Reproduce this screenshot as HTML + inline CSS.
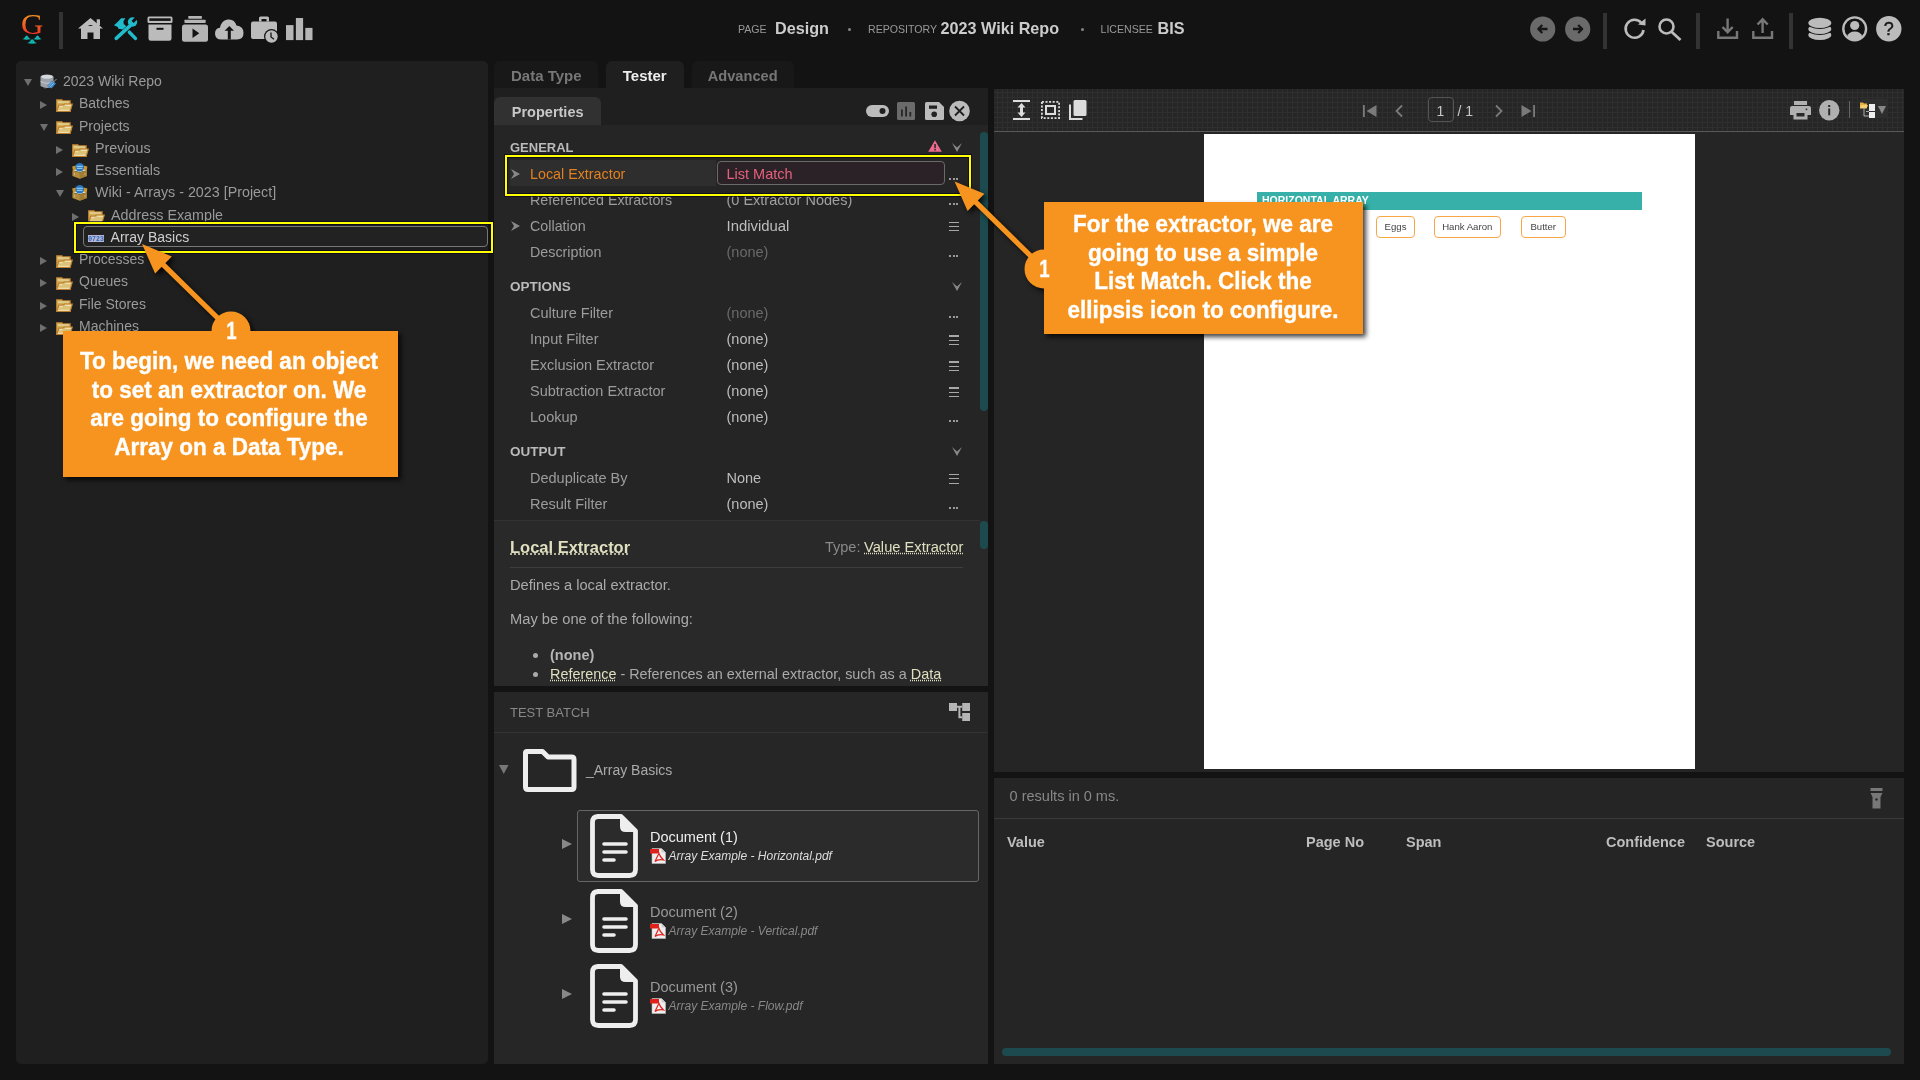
<!DOCTYPE html>
<html><head><meta charset="utf-8">
<style>
*{box-sizing:border-box;margin:0;padding:0}
html,body{width:1920px;height:1080px;overflow:hidden;background:#131313;font-family:"Liberation Sans",sans-serif;color:#999}
.a{position:absolute}
.t{position:absolute;white-space:nowrap;line-height:1}
svg{position:absolute;overflow:visible}
</style></head><body>
<div style="position:absolute;left:0;top:0;width:1920px;height:1080px;will-change:transform;overflow:hidden">

<div id="topbar">
 <!-- logo -->
 <svg style="left:18px;top:10px" width="30" height="36" viewBox="0 0 30 36">
  <defs><linearGradient id="gg" x1="0" y1="0" x2="0" y2="1"><stop offset="0.1" stop-color="#f5a21e"/><stop offset="0.9" stop-color="#ec2228"/></linearGradient></defs>
  <text x="14.3" y="24" text-anchor="middle" font-family="Liberation Serif" font-size="29.5" fill="url(#gg)" transform="translate(-0.7 0) scale(1.05 1)">G</text>
  <path d="M4.2 29.1 C7.4 28.5 7.1 25.6 8.7 25.6 C10.299999999999999 25.6 10.0 28.5 13.2 29.1 Q8.7 30.5 4.2 29.1Z M15 29.1 C18.2 28.5 17.9 25.6 19.5 25.6 C21.1 25.6 20.8 28.5 24 29.1 Q19.5 30.5 15 29.1Z M9 33.1 C12.2 32.5 12.55 29.2 14.15 29.2 C15.75 29.2 16.1 32.5 19.3 33.1 Q14.15 34.5 9 33.1Z" fill="#12b3ab"/>
 </svg>
 <div class="a" style="left:59px;top:12px;width:3.5px;height:37px;background:#333"></div>
 <!-- home -->
 <svg style="left:78px;top:18px" width="25" height="21" viewBox="0 0 25 21">
  <path d="M12.5 0 L25 10.5 L22 10.5 L22 21 L15.5 21 L15.5 14.5 L9.5 14.5 L9.5 21 L3 21 L3 10.5 L0 10.5 Z" fill="#bbb"/>
  <rect x="18.7" y="1.3" width="3.3" height="6" fill="#bbb"/>
  <path d="M10 8 Q12.5 5.8 15 8Z" fill="#131313"/>
 </svg>
 <!-- tools -->
 <svg style="left:113px;top:17px" width="25" height="24" viewBox="0 0 25 24">
  <g fill="#20bccb">
   <path d="M3.2 21.4 L17.2 8.6" stroke="#20bccb" stroke-width="3.5" stroke-linecap="round"/>
   <path d="M16.4 15.2 L22.4 21.4" stroke="#20bccb" stroke-width="3.5" stroke-linecap="round"/>
   <circle cx="19.5" cy="5" r="4.7"/>
   <path d="M19.6 4.9 L24.6 -0.1" stroke="#131313" stroke-width="3" stroke-linecap="butt"/>
   <path d="M1 8.2 L4.1 5.4 L8.2 1.3 L12.3 1.3 L10.4 4.4 L10.7 7 L13.3 9.2 L9.8 12.6 L5.4 11.7 L4.8 10.1Z"/>
  </g>
 </svg>
 <!-- archive -->
 <svg style="left:147px;top:16px" width="26" height="25" viewBox="0 0 26 25">
  <rect x="0.5" y="0.5" width="25" height="6.5" rx="1.5" fill="#bbb"/>
  <rect x="2.3" y="2.3" width="21.4" height="2.6" fill="#131313"/>
  <path d="M1.5 8.5 H24.5 V22.5 Q24.5 24.8 22.2 24.8 H3.8 Q1.5 24.8 1.5 22.5Z" fill="#bbb"/>
  <rect x="9.5" y="11.8" width="7" height="2" fill="#131313"/>
 </svg>
 <!-- play stack -->
 <svg style="left:182px;top:16px" width="26" height="26" viewBox="0 0 26 26">
  <rect x="6.3" y="0" width="13.6" height="2.8" rx="0.5" fill="#b5b5b5"/>
  <rect x="2.5" y="3.7" width="21.1" height="3.3" rx="0.5" fill="#b5b5b5"/>
  <rect x="0" y="8.4" width="26" height="17.3" rx="2.5" fill="#b5b5b5"/>
  <path d="M10.5 12.5 L17.3 17.3 L10.5 22Z" fill="#131313"/>
 </svg>
 <!-- cloud upload -->
 <svg style="left:215px;top:18px" width="29" height="22" viewBox="0 0 29 22">
  <path d="M6.5 21.5 Q0 21.5 0 15.5 Q0 10.5 5 9.8 Q6 3 12.5 1.5 Q19.5 0.5 21.5 7.5 Q28.5 8 28.5 15 Q28.5 21.5 22 21.5Z" fill="#bbb"/>
  <path d="M14.3 8 L19 12.8 L15.8 12.8 L15.8 21.5 L12.8 21.5 L12.8 12.8 L9.6 12.8Z" fill="#131313"/>
 </svg>
 <!-- briefcase clock -->
 <svg style="left:251px;top:16px" width="28" height="28" viewBox="0 0 28 28">
  <path d="M8 5.5 V2 Q8 0.5 9.5 0.5 H16.5 Q18 0.5 18 2 V5.5 H15.5 V3 H10.5 V5.5Z" fill="#bbb"/>
  <rect x="0" y="5.5" width="26" height="17.5" rx="2" fill="#bbb"/>
  <circle cx="20.5" cy="20.5" r="7.5" fill="#131313"/>
  <circle cx="20.5" cy="20.5" r="6.2" fill="#bbb"/>
  <path d="M20 16.5 V21 L23 23.2" stroke="#131313" stroke-width="1.3" fill="none"/>
 </svg>
 <!-- bar chart -->
 <svg style="left:285.7px;top:17.8px" width="27" height="23" viewBox="0 0 27 23">
  <rect x="0" y="7.1" width="7.5" height="15" fill="#b5b5b5"/>
  <rect x="9.9" y="0" width="7.2" height="22.1" fill="#b5b5b5"/>
  <rect x="19.3" y="9.9" width="7.2" height="12.2" fill="#b5b5b5"/>
 </svg>

 <!-- center breadcrumb -->
 <div class="t" style="left:738px;top:24px;font-size:10.6px;color:#999">PAGE</div>
 <div class="t" style="left:775px;top:20px;font-size:16.2px;font-weight:bold;color:#ccc">Design</div>
 <div class="a" style="left:848px;top:28px;width:3px;height:3px;border-radius:2px;background:#888"></div>
 <div class="t" style="left:868px;top:24px;font-size:10.6px;color:#999">REPOSITORY</div>
 <div class="t" style="left:940.5px;top:20px;font-size:16.2px;font-weight:bold;color:#ccc">2023 Wiki Repo</div>
 <div class="a" style="left:1081px;top:28px;width:3px;height:3px;border-radius:2px;background:#888"></div>
 <div class="t" style="left:1100.5px;top:24px;font-size:10.6px;color:#999">LICENSEE</div>
 <div class="t" style="left:1157.5px;top:20px;font-size:16.2px;font-weight:bold;color:#ccc">BIS</div>

 <!-- right icons -->
 <svg style="left:1530px;top:16px" width="26" height="26" viewBox="0 0 26 26">
  <circle cx="12.7" cy="13" r="12.6" fill="#6a6a6a"/>
  <path d="M17.5 13 H8.5 M12.3 9 L8.3 13 L12.3 17" stroke="#161616" stroke-width="2.3" fill="none" stroke-linejoin="round"/>
 </svg>
 <svg style="left:1564.5px;top:16px" width="26" height="26" viewBox="0 0 26 26">
  <circle cx="12.7" cy="13" r="12.6" fill="#6a6a6a"/>
  <path d="M8 13 H17 M13.2 9 L17.2 13 L13.2 17" stroke="#161616" stroke-width="2.3" fill="none" stroke-linejoin="round"/>
 </svg>
 <div class="a" style="left:1603px;top:12.5px;width:3.5px;height:36px;background:#333"></div>
 <!-- refresh -->
 <svg style="left:1624px;top:18px" width="24" height="22" viewBox="0 0 24 22">
  <path d="M19.5 12 A9 9 0 1 1 17.5 5" stroke="#bbb" stroke-width="2.6" fill="none"/>
  <path d="M14 6.5 L21.5 7.5 L21.5 0.5Z" fill="#bbb"/>
 </svg>
 <!-- search -->
 <svg style="left:1658px;top:18px" width="24" height="23" viewBox="0 0 24 23">
  <circle cx="8.5" cy="8.5" r="7" stroke="#bbb" stroke-width="2.6" fill="none"/>
  <line x1="13.5" y1="13.8" x2="22.5" y2="22" stroke="#bbb" stroke-width="2.8"/>
 </svg>
 <div class="a" style="left:1696px;top:12.5px;width:3.5px;height:36px;background:#333"></div>
 <!-- download -->
 <svg style="left:1717px;top:18px" width="22" height="22" viewBox="0 0 22 22">
  <path d="M1.3 13 V19.8 H20 V13" stroke="#777" stroke-width="2.4" fill="none"/>
  <path d="M10.6 0.5 V14 M5.5 9 L10.6 14.2 L15.7 9" stroke="#777" stroke-width="2.4" fill="none"/>
 </svg>
 <!-- upload -->
 <svg style="left:1752px;top:18px" width="22" height="22" viewBox="0 0 22 22">
  <path d="M1.3 13 V19.8 H20 V13" stroke="#777" stroke-width="2.4" fill="none"/>
  <path d="M10.6 15 V1.5 M5.5 6.5 L10.6 1.3 L15.7 6.5" stroke="#777" stroke-width="2.4" fill="none"/>
 </svg>
 <div class="a" style="left:1789px;top:12.5px;width:3.5px;height:36px;background:#333"></div>
 <!-- db -->
 <svg style="left:1808px;top:17px" width="24" height="24" viewBox="0 0 24 24">
  <ellipse cx="11.8" cy="17.9" rx="11.6" ry="5.2" fill="#bbb"/>
  <ellipse cx="11.8" cy="11.9" rx="12.6" ry="6.2" fill="#131313"/>
  <ellipse cx="11.8" cy="11.9" rx="11.6" ry="5.2" fill="#bbb"/>
  <ellipse cx="11.8" cy="5.9" rx="12.6" ry="6.2" fill="#131313"/>
  <ellipse cx="11.8" cy="5.9" rx="11.6" ry="5.2" fill="#bbb"/>
 </svg>
 <!-- user -->
 <svg style="left:1841.5px;top:16px" width="26" height="26" viewBox="0 0 26 26">
  <circle cx="12.7" cy="12.8" r="11.4" stroke="#bbb" stroke-width="2.4" fill="none"/>
  <circle cx="12.7" cy="9.5" r="4.6" fill="#bbb"/>
  <path d="M5 20.5 Q7 15.5 12.7 15.5 Q18.4 15.5 20.4 20.5 Q17 24 12.7 24 Q8.4 24 5 20.5Z" fill="#bbb"/>
 </svg>
 <!-- help -->
 <svg style="left:1876px;top:16px" width="26" height="26" viewBox="0 0 26 26">
  <circle cx="12.8" cy="12.8" r="12.7" fill="#bbb"/>
  <text x="12.8" y="19.3" text-anchor="middle" font-family="Liberation Sans" font-size="18" fill="#161616" stroke="#161616" stroke-width="0.4">?</text>
 </svg>
</div>


<div class="a" style="left:16px;top:61px;width:472px;height:1003px;background:#1f1f1f;border-radius:5px"></div>
<svg style="left:23.5px;top:79.2px" width="8" height="7" viewBox="0 0 8 7"><path d="M0 0 H8 L4.0 7Z" fill="#6f6f6f"/></svg>
<svg style="left:40px;top:73.7px" width="17" height="15" viewBox="0 0 17 15"><ellipse cx="7" cy="3" rx="6.5" ry="2.6" fill="#b8bcc2"/><path d="M0.5 3 V12 Q7 16 13.5 12 V3 Q7 7 0.5 3Z" fill="#9ea3aa"/><path d="M0.5 7.5 Q7 11 13.5 7.5" stroke="#d0d3d8" stroke-width="0.8" fill="none"/><ellipse cx="7" cy="2.8" rx="5.5" ry="1.8" fill="#d6d9dd"/><path d="M7 12 L12 6.5 L16 9.5 L11.5 14.5Z" fill="#3b86c6"/><path d="M8.5 12.3 L12.5 7.8 M10 13.3 L14 8.8" stroke="#9cc8ee" stroke-width="0.8"/><path d="M16.5 5 L13.5 8 M7 12.5 L5 14.5" stroke="#999" stroke-width="1"/></svg>
<div class="t" style="left:63px;top:74.00px;font-size:14px;color:#9a9a9a;">2023 Wiki Repo</div>
<svg style="left:39.5px;top:101.25px" width="7" height="8" viewBox="0 0 7 8"><path d="M0 0 L7 4.0 L0 8Z" fill="#6f6f6f"/></svg>
<svg style="left:56px;top:99.15px" width="17" height="13" viewBox="0 0 17 13"><path d="M0.6 12.4 V0.8 H6 L7 1.8 H14.2 V12.4Z" fill="#d2b25c" stroke="#bb7c2c" stroke-width="1.1"/><path d="M1.6 3 H13" stroke="#f2e6c0" stroke-width="0.9"/><path d="M0.7 12.4 L2.8 6 H7 L8.4 5 H16.3 L14.2 12.4Z" fill="#dcc277" stroke="#bb7c2c" stroke-width="1.1"/><path d="M9.3 6.3 H15.2 M3.3 7.8 H6.5 M1.8 11.3 H13.3" stroke="#f5ecc8" stroke-width="0.9"/></svg>
<div class="t" style="left:79px;top:96.00px;font-size:14px;color:#9a9a9a;">Batches</div>
<svg style="left:39.5px;top:123.69999999999999px" width="8" height="7" viewBox="0 0 8 7"><path d="M0 0 H8 L4.0 7Z" fill="#6f6f6f"/></svg>
<svg style="left:56px;top:121.39999999999999px" width="17" height="13" viewBox="0 0 17 13"><path d="M0.6 12.4 V0.8 H6 L7 1.8 H14.2 V12.4Z" fill="#d2b25c" stroke="#bb7c2c" stroke-width="1.1"/><path d="M1.6 3 H13" stroke="#f2e6c0" stroke-width="0.9"/><path d="M0.7 12.4 L2.8 6 H7 L8.4 5 H16.3 L14.2 12.4Z" fill="#dcc277" stroke="#bb7c2c" stroke-width="1.1"/><path d="M9.3 6.3 H15.2 M3.3 7.8 H6.5 M1.8 11.3 H13.3" stroke="#f5ecc8" stroke-width="0.9"/></svg>
<div class="t" style="left:79px;top:119.00px;font-size:14px;color:#9a9a9a;">Projects</div>
<svg style="left:55.5px;top:145.75px" width="7" height="8" viewBox="0 0 7 8"><path d="M0 0 L7 4.0 L0 8Z" fill="#6f6f6f"/></svg>
<svg style="left:72px;top:143.64999999999998px" width="17" height="13" viewBox="0 0 17 13"><path d="M0.6 12.4 V0.8 H6 L7 1.8 H14.2 V12.4Z" fill="#d2b25c" stroke="#bb7c2c" stroke-width="1.1"/><path d="M1.6 3 H13" stroke="#f2e6c0" stroke-width="0.9"/><path d="M0.7 12.4 L2.8 6 H7 L8.4 5 H16.3 L14.2 12.4Z" fill="#dcc277" stroke="#bb7c2c" stroke-width="1.1"/><path d="M9.3 6.3 H15.2 M3.3 7.8 H6.5 M1.8 11.3 H13.3" stroke="#f5ecc8" stroke-width="0.9"/></svg>
<div class="t" style="left:95px;top:141.00px;font-size:14.3px;color:#9a9a9a;">Previous</div>
<svg style="left:55.5px;top:168.0px" width="7" height="8" viewBox="0 0 7 8"><path d="M0 0 L7 4.0 L0 8Z" fill="#6f6f6f"/></svg>
<svg style="left:72px;top:163.2px" width="16" height="16" viewBox="0 0 16 16"><path d="M0.2 3.5 L3.8 2.5 L5.5 7 L1 8Z" fill="#c8962e"/><path d="M15.3 3.5 L11.7 2.5 L10.3 7 L14.8 8Z" fill="#c8962e"/><path d="M1 7.2 L7.7 6 L14.6 7.2 L7.7 9.3Z" fill="#e8e0c8"/><circle cx="7.7" cy="4.3" r="4.3" fill="#2678c2"/><path d="M4.6 3.3 H10.8 M4.9 5.3 H10.5" stroke="#d8ecf8" stroke-width="0.8"/><path d="M0.4 7.4 L7.7 9.6 L15 7.4 V12.9 L7.7 15.8 L0.4 12.9Z" fill="#b48d3e"/><path d="M7.7 9.6 V15.8 L15 12.9 V7.4Z" fill="#a07c34"/><path d="M2.5 9.8 V12.3 M13 9.8 V12.3" stroke="#d9c48a" stroke-width="0.7"/></svg>
<div class="t" style="left:95px;top:163.00px;font-size:14.3px;color:#9a9a9a;">Essentials</div>
<svg style="left:55.5px;top:190.45px" width="8" height="7" viewBox="0 0 8 7"><path d="M0 0 H8 L4.0 7Z" fill="#6f6f6f"/></svg>
<svg style="left:72px;top:185.45px" width="16" height="16" viewBox="0 0 16 16"><path d="M0.2 3.5 L3.8 2.5 L5.5 7 L1 8Z" fill="#c8962e"/><path d="M15.3 3.5 L11.7 2.5 L10.3 7 L14.8 8Z" fill="#c8962e"/><path d="M1 7.2 L7.7 6 L14.6 7.2 L7.7 9.3Z" fill="#e8e0c8"/><circle cx="7.7" cy="4.3" r="4.3" fill="#2678c2"/><path d="M4.6 3.3 H10.8 M4.9 5.3 H10.5" stroke="#d8ecf8" stroke-width="0.8"/><path d="M0.4 7.4 L7.7 9.6 L15 7.4 V12.9 L7.7 15.8 L0.4 12.9Z" fill="#b48d3e"/><path d="M7.7 9.6 V15.8 L15 12.9 V7.4Z" fill="#a07c34"/><path d="M2.5 9.8 V12.3 M13 9.8 V12.3" stroke="#d9c48a" stroke-width="0.7"/></svg>
<div class="t" style="left:95px;top:185.00px;font-size:14.3px;color:#9a9a9a;">Wiki - Arrays - 2023 [Project]</div>
<svg style="left:71.5px;top:212.5px" width="7" height="8" viewBox="0 0 7 8"><path d="M0 0 L7 4.0 L0 8Z" fill="#6f6f6f"/></svg>
<svg style="left:88px;top:210.39999999999998px" width="17" height="13" viewBox="0 0 17 13"><path d="M0.6 12.4 V0.8 H6 L7 1.8 H14.2 V12.4Z" fill="#d2b25c" stroke="#bb7c2c" stroke-width="1.1"/><path d="M1.6 3 H13" stroke="#f2e6c0" stroke-width="0.9"/><path d="M0.7 12.4 L2.8 6 H7 L8.4 5 H16.3 L14.2 12.4Z" fill="#dcc277" stroke="#bb7c2c" stroke-width="1.1"/><path d="M9.3 6.3 H15.2 M3.3 7.8 H6.5 M1.8 11.3 H13.3" stroke="#f5ecc8" stroke-width="0.9"/></svg>
<div class="t" style="left:111px;top:208.00px;font-size:14.3px;color:#9a9a9a;">Address Example</div>
<div class="a" style="left:83px;top:226px;width:405px;height:21px;background:#222;border:1.3px solid #777;border-radius:4px"></div>
<svg style="left:88px;top:234.5px" width="16" height="7" viewBox="0 0 16 7"><rect x="0" y="0" width="16" height="7" fill="#b9b3d9"/><text x="8" y="6" text-anchor="middle" font-family="Liberation Mono" font-weight="bold" font-size="6.5" fill="#2a6fb0">0723</text></svg>
<div class="t" style="left:110.6px;top:230.00px;font-size:14px;color:#cfcfcf;">Array Basics</div>
<svg style="left:39.5px;top:257.0px" width="7" height="8" viewBox="0 0 7 8"><path d="M0 0 L7 4.0 L0 8Z" fill="#6f6f6f"/></svg>
<svg style="left:56px;top:254.89999999999998px" width="17" height="13" viewBox="0 0 17 13"><path d="M0.6 12.4 V0.8 H6 L7 1.8 H14.2 V12.4Z" fill="#d2b25c" stroke="#bb7c2c" stroke-width="1.1"/><path d="M1.6 3 H13" stroke="#f2e6c0" stroke-width="0.9"/><path d="M0.7 12.4 L2.8 6 H7 L8.4 5 H16.3 L14.2 12.4Z" fill="#dcc277" stroke="#bb7c2c" stroke-width="1.1"/><path d="M9.3 6.3 H15.2 M3.3 7.8 H6.5 M1.8 11.3 H13.3" stroke="#f5ecc8" stroke-width="0.9"/></svg>
<div class="t" style="left:79px;top:252.00px;font-size:14px;color:#9a9a9a;">Processes</div>
<svg style="left:39.5px;top:279.25px" width="7" height="8" viewBox="0 0 7 8"><path d="M0 0 L7 4.0 L0 8Z" fill="#6f6f6f"/></svg>
<svg style="left:56px;top:277.15px" width="17" height="13" viewBox="0 0 17 13"><path d="M0.6 12.4 V0.8 H6 L7 1.8 H14.2 V12.4Z" fill="#d2b25c" stroke="#bb7c2c" stroke-width="1.1"/><path d="M1.6 3 H13" stroke="#f2e6c0" stroke-width="0.9"/><path d="M0.7 12.4 L2.8 6 H7 L8.4 5 H16.3 L14.2 12.4Z" fill="#dcc277" stroke="#bb7c2c" stroke-width="1.1"/><path d="M9.3 6.3 H15.2 M3.3 7.8 H6.5 M1.8 11.3 H13.3" stroke="#f5ecc8" stroke-width="0.9"/></svg>
<div class="t" style="left:79px;top:274.00px;font-size:14px;color:#9a9a9a;">Queues</div>
<svg style="left:39.5px;top:301.5px" width="7" height="8" viewBox="0 0 7 8"><path d="M0 0 L7 4.0 L0 8Z" fill="#6f6f6f"/></svg>
<svg style="left:56px;top:299.4px" width="17" height="13" viewBox="0 0 17 13"><path d="M0.6 12.4 V0.8 H6 L7 1.8 H14.2 V12.4Z" fill="#d2b25c" stroke="#bb7c2c" stroke-width="1.1"/><path d="M1.6 3 H13" stroke="#f2e6c0" stroke-width="0.9"/><path d="M0.7 12.4 L2.8 6 H7 L8.4 5 H16.3 L14.2 12.4Z" fill="#dcc277" stroke="#bb7c2c" stroke-width="1.1"/><path d="M9.3 6.3 H15.2 M3.3 7.8 H6.5 M1.8 11.3 H13.3" stroke="#f5ecc8" stroke-width="0.9"/></svg>
<div class="t" style="left:79px;top:297.00px;font-size:14px;color:#9a9a9a;">File Stores</div>
<svg style="left:39.5px;top:323.75px" width="7" height="8" viewBox="0 0 7 8"><path d="M0 0 L7 4.0 L0 8Z" fill="#6f6f6f"/></svg>
<svg style="left:56px;top:321.65px" width="17" height="13" viewBox="0 0 17 13"><path d="M0.6 12.4 V0.8 H6 L7 1.8 H14.2 V12.4Z" fill="#d2b25c" stroke="#bb7c2c" stroke-width="1.1"/><path d="M1.6 3 H13" stroke="#f2e6c0" stroke-width="0.9"/><path d="M0.7 12.4 L2.8 6 H7 L8.4 5 H16.3 L14.2 12.4Z" fill="#dcc277" stroke="#bb7c2c" stroke-width="1.1"/><path d="M9.3 6.3 H15.2 M3.3 7.8 H6.5 M1.8 11.3 H13.3" stroke="#f5ecc8" stroke-width="0.9"/></svg>
<div class="t" style="left:79px;top:319.00px;font-size:14px;color:#9a9a9a;">Machines</div>
<div class="a" style="left:74px;top:222px;width:419px;height:31px;background:transparent;border:2.4px solid #ffff00;box-shadow:0 0 0 1px rgba(5,5,25,0.7), inset 0 0 0 1px rgba(5,5,25,0.7)"></div>
<div class="a" style="left:494px;top:61px;width:104px;height:27px;background:#181818;border-radius:6px 6px 0 0"></div>
<div class="a" style="left:606px;top:61px;width:78px;height:27px;background:#1f1f1f;border-radius:6px 6px 0 0"></div>
<div class="a" style="left:692px;top:61px;width:102px;height:27px;background:#181818;border-radius:6px 6px 0 0"></div>
<div class="t" style="left:511px;top:68.00px;font-size:15px;color:#777;font-weight:bold">Data Type</div>
<div class="t" style="left:622.8px;top:68.00px;font-size:15px;color:#eee;font-weight:bold">Tester</div>
<div class="t" style="left:707.8px;top:69.00px;font-size:14.6px;color:#777;font-weight:bold">Advanced</div>
<div class="a" style="left:494px;top:88px;width:494px;height:37px;background:#1f1f1f;"></div>
<div class="a" style="left:494px;top:97px;width:107px;height:28px;background:#313131;border-radius:6px 6px 0 0"></div>
<div class="t" style="left:511.8px;top:105.00px;font-size:14.5px;color:#c8c8c8;font-weight:bold">Properties</div>
<div class="a" style="left:494px;top:125px;width:494px;height:561px;background:#252525;"></div>
<div class="a" style="left:494px;top:521px;width:494px;height:165px;background:#292929;"></div>
<div class="a" style="left:494px;top:520px;width:486px;height:1px;background:#333;"></div>
<div class="a" style="left:494px;top:692px;width:494px;height:372px;background:#262626;"></div>
<svg style="left:866px;top:105px" width="23" height="12" viewBox="0 0 23 12"><rect x="0" y="0" width="23" height="12" rx="6" fill="#bbb"/><circle cx="16.5" cy="6" r="3" fill="#1f1f1f"/></svg>
<svg style="left:897px;top:102px" width="18" height="18" viewBox="0 0 18 18"><rect x="0" y="0" width="18" height="18" rx="1.5" fill="#6b6b6b"/><rect x="4" y="7.5" width="1.8" height="7" fill="#262626"/><rect x="8.2" y="4.5" width="1.8" height="10" fill="#262626"/><rect x="12.4" y="10" width="1.8" height="4.5" fill="#262626"/></svg>
<svg style="left:925px;top:102px" width="19" height="18" viewBox="0 0 19 18"><path d="M1.5 0 H14 L19 5 V16.5 Q19 18 17.5 18 H1.5 Q0 18 0 16.5 V1.5 Q0 0 1.5 0Z" fill="#bbb"/><rect x="4" y="3.5" width="8" height="3.3" fill="#222"/><circle cx="9.2" cy="12.2" r="2.8" fill="#222"/></svg>
<svg style="left:949px;top:101px" width="21" height="20" viewBox="0 0 21 20"><circle cx="10.5" cy="10" r="10.3" fill="#bbb"/><path d="M6 5.5 L15 14.5 M15 5.5 L6 14.5" stroke="#1f1f1f" stroke-width="1.8"/></svg>
<div class="t" style="left:510px;top:141.00px;font-size:13px;color:#bbb;font-weight:bold">GENERAL</div>
<svg style="left:928px;top:139.5px" width="14" height="12" viewBox="0 0 14 12"><path d="M7 0.3 L13.8 11.8 H0.2Z" fill="#ec6a8d"/><rect x="6.3" y="4" width="1.5" height="4.2" fill="#242424"/><rect x="6.3" y="9" width="1.5" height="1.5" fill="#242424"/></svg>
<svg style="left:952px;top:143px" width="10" height="9" viewBox="0 0 10 9"><path d="M0 0 L5 9 L10 0 L5 4.5Z" fill="#888"/></svg>
<div class="a" style="left:510px;top:160px;width:206px;height:26px;background:#2e2e2e;"></div>
<svg style="left:511px;top:169px" width="9" height="10" viewBox="0 0 9 10"><path d="M0 0 L9 5 L0 10 L3 5Z" fill="#888"/></svg>
<div class="t" style="left:530px;top:167.00px;font-size:14.3px;color:#e3811f;">Local Extractor</div>
<div class="a" style="left:717px;top:161px;width:228px;height:24px;background:#2a2226;border:1.2px solid #6a6a6a;border-radius:4px"></div>
<div class="t" style="left:726.5px;top:167.00px;font-size:14.5px;color:#e6607e;">List Match</div>
<div class="a" style="left:949px;top:177.5px;width:2px;height:2px;background:#9a9a9a;"></div>
<div class="a" style="left:952.6px;top:177.5px;width:2px;height:2px;background:#9a9a9a;"></div>
<div class="a" style="left:956.2px;top:177.5px;width:2px;height:2px;background:#9a9a9a;"></div>
<div class="t" style="left:530px;top:193.00px;font-size:14.3px;color:#9c9c9c;">Referenced Extractors</div>
<div class="t" style="left:726.5px;top:193.00px;font-size:14.5px;color:#a0a0a0;">(0 Extractor Nodes)</div>
<div class="a" style="left:949px;top:203px;width:2px;height:2px;background:#9a9a9a;"></div>
<div class="a" style="left:952.6px;top:203px;width:2px;height:2px;background:#9a9a9a;"></div>
<div class="a" style="left:956.2px;top:203px;width:2px;height:2px;background:#9a9a9a;"></div>
<svg style="left:511px;top:221px" width="9" height="10" viewBox="0 0 9 10"><path d="M0 0 L9 5 L0 10 L3 5Z" fill="#888"/></svg>
<div class="t" style="left:530px;top:219.00px;font-size:14.3px;color:#9c9c9c;">Collation</div>
<div class="t" style="left:726.5px;top:219.00px;font-size:14.9px;color:#bdbdbd;">Individual</div>
<div class="a" style="left:948.5px;top:221.5px;width:10.5px;height:1.3px;background:#a8a8a8;"></div>
<div class="a" style="left:948.5px;top:225.9px;width:10.5px;height:1.3px;background:#a8a8a8;"></div>
<div class="a" style="left:948.5px;top:230.2px;width:10.5px;height:1.3px;background:#a8a8a8;"></div>
<div class="t" style="left:530px;top:245.00px;font-size:14.3px;color:#9c9c9c;">Description</div>
<div class="t" style="left:726.5px;top:245.00px;font-size:14.5px;color:#6a6a6a;">(none)</div>
<div class="a" style="left:949px;top:255px;width:2px;height:2px;background:#9a9a9a;"></div>
<div class="a" style="left:952.6px;top:255px;width:2px;height:2px;background:#9a9a9a;"></div>
<div class="a" style="left:956.2px;top:255px;width:2px;height:2px;background:#9a9a9a;"></div>
<div class="t" style="left:510px;top:280.00px;font-size:13.5px;color:#bbb;font-weight:bold">OPTIONS</div>
<svg style="left:952px;top:282px" width="10" height="9" viewBox="0 0 10 9"><path d="M0 0 L5 9 L10 0 L5 4.5Z" fill="#888"/></svg>
<div class="t" style="left:530px;top:306.00px;font-size:14.5px;color:#9c9c9c;">Culture Filter</div>
<div class="t" style="left:726.5px;top:306.00px;font-size:14.5px;color:#6a6a6a;">(none)</div>
<div class="a" style="left:949px;top:316.3px;width:2px;height:2px;background:#9a9a9a;"></div>
<div class="a" style="left:952.6px;top:316.3px;width:2px;height:2px;background:#9a9a9a;"></div>
<div class="a" style="left:956.2px;top:316.3px;width:2px;height:2px;background:#9a9a9a;"></div>
<div class="t" style="left:530px;top:332.00px;font-size:14.5px;color:#9c9c9c;">Input Filter</div>
<div class="t" style="left:726.5px;top:332.00px;font-size:14.5px;color:#bdbdbd;">(none)</div>
<div class="a" style="left:948.5px;top:335.3px;width:10.5px;height:1.3px;background:#a8a8a8;"></div>
<div class="a" style="left:948.5px;top:339.7px;width:10.5px;height:1.3px;background:#a8a8a8;"></div>
<div class="a" style="left:948.5px;top:344.0px;width:10.5px;height:1.3px;background:#a8a8a8;"></div>
<div class="t" style="left:530px;top:358.00px;font-size:14.5px;color:#9c9c9c;">Exclusion Extractor</div>
<div class="t" style="left:726.5px;top:358.00px;font-size:14.5px;color:#bdbdbd;">(none)</div>
<div class="a" style="left:948.5px;top:361.3px;width:10.5px;height:1.3px;background:#a8a8a8;"></div>
<div class="a" style="left:948.5px;top:365.7px;width:10.5px;height:1.3px;background:#a8a8a8;"></div>
<div class="a" style="left:948.5px;top:370.0px;width:10.5px;height:1.3px;background:#a8a8a8;"></div>
<div class="t" style="left:530px;top:384.00px;font-size:14.5px;color:#9c9c9c;">Subtraction Extractor</div>
<div class="t" style="left:726.5px;top:384.00px;font-size:14.5px;color:#bdbdbd;">(none)</div>
<div class="a" style="left:948.5px;top:387.3px;width:10.5px;height:1.3px;background:#a8a8a8;"></div>
<div class="a" style="left:948.5px;top:391.7px;width:10.5px;height:1.3px;background:#a8a8a8;"></div>
<div class="a" style="left:948.5px;top:396.0px;width:10.5px;height:1.3px;background:#a8a8a8;"></div>
<div class="t" style="left:530px;top:410.00px;font-size:14.5px;color:#9c9c9c;">Lookup</div>
<div class="t" style="left:726.5px;top:410.00px;font-size:14.5px;color:#bdbdbd;">(none)</div>
<div class="a" style="left:949px;top:420.3px;width:2px;height:2px;background:#9a9a9a;"></div>
<div class="a" style="left:952.6px;top:420.3px;width:2px;height:2px;background:#9a9a9a;"></div>
<div class="a" style="left:956.2px;top:420.3px;width:2px;height:2px;background:#9a9a9a;"></div>
<div class="t" style="left:510px;top:445.00px;font-size:13.5px;color:#bbb;font-weight:bold">OUTPUT</div>
<svg style="left:952px;top:447px" width="10" height="9" viewBox="0 0 10 9"><path d="M0 0 L5 9 L10 0 L5 4.5Z" fill="#888"/></svg>
<div class="t" style="left:530px;top:471.00px;font-size:14.5px;color:#9c9c9c;">Deduplicate By</div>
<div class="t" style="left:726.5px;top:471.00px;font-size:14.5px;color:#bdbdbd;">None</div>
<div class="a" style="left:948.5px;top:473.8px;width:10.5px;height:1.3px;background:#a8a8a8;"></div>
<div class="a" style="left:948.5px;top:478.2px;width:10.5px;height:1.3px;background:#a8a8a8;"></div>
<div class="a" style="left:948.5px;top:482.5px;width:10.5px;height:1.3px;background:#a8a8a8;"></div>
<div class="t" style="left:530px;top:497.00px;font-size:14.5px;color:#9c9c9c;">Result Filter</div>
<div class="t" style="left:726.5px;top:497.00px;font-size:14.5px;color:#bdbdbd;">(none)</div>
<div class="a" style="left:949px;top:507.3px;width:2px;height:2px;background:#9a9a9a;"></div>
<div class="a" style="left:952.6px;top:507.3px;width:2px;height:2px;background:#9a9a9a;"></div>
<div class="a" style="left:956.2px;top:507.3px;width:2px;height:2px;background:#9a9a9a;"></div>
<div class="a" style="left:980px;top:132px;width:8px;height:279px;background:#1c4a4e;border-radius:4px"></div>
<div class="a" style="left:980px;top:521px;width:8px;height:28px;background:#1c4a4e;border-radius:4px"></div>
<div class="a" style="left:505px;top:155px;width:466px;height:41px;background:transparent;border:2.2px solid #ffff00;box-shadow:0 0 0 1px rgba(5,5,25,0.7), inset 0 0 0 1px rgba(5,5,25,0.7)"></div>
<div class="t" style="left:510px;top:539.00px;font-size:16.5px;color:#e0dfc0;font-weight:bold;text-decoration:underline dotted;text-underline-offset:1px">Local Extractor</div>
<div class="t" style="left:825px;top:540.00px;font-size:14.5px;color:#8a8a8a;">Type:</div>
<div class="t" style="left:864px;top:540.00px;font-size:14.7px;color:#e0dfc0;text-decoration:underline dotted;text-underline-offset:1px">Value Extractor</div>
<div class="a" style="left:510px;top:567px;width:453px;height:1px;background:#3e3e3e;"></div>
<div class="t" style="left:510px;top:578.00px;font-size:14.7px;color:#aaa;">Defines a local extractor.</div>
<div class="t" style="left:510px;top:612.00px;font-size:14.7px;color:#aaa;">May be one of the following:</div>
<div class="a" style="left:533px;top:652.5px;width:5px;height:5px;background:#aaa;border-radius:3px"></div>
<div class="t" style="left:550px;top:648.00px;font-size:14.5px;color:#b5b5b5;font-weight:bold">(none)</div>
<div class="a" style="left:533px;top:671.5px;width:5px;height:5px;background:#aaa;border-radius:3px"></div>
<div class="t" style="left:550px;top:667.00px;font-size:14.4px;color:#aaa;"><span style="color:#e0dfc0;text-decoration:underline dotted;text-underline-offset:1px">Reference</span> - References an external extractor, such as a <span style="color:#e0dfc0;text-decoration:underline dotted;text-underline-offset:1px">Data</span></div>
<div class="t" style="left:510px;top:706.00px;font-size:13px;color:#888;">TEST BATCH</div>
<svg style="left:948px;top:702px" width="23" height="20" viewBox="0 0 23 20"><rect x="1" y="1" width="8" height="8" fill="#b5b5b5"/><rect x="14.2" y="1" width="7.8" height="8" fill="#b5b5b5"/><rect x="14.2" y="11" width="7.8" height="8" fill="#b5b5b5"/><path d="M9 4.8 H14.2 M11.4 4.8 V15.2 H14.2" stroke="#b5b5b5" stroke-width="2" fill="none"/></svg>
<div class="a" style="left:494px;top:732px;width:494px;height:1px;background:#333;"></div>
<svg style="left:498.5px;top:765px" width="9.5" height="9" viewBox="0 0 9.5 9"><path d="M0 0 H9.5 L4.75 9Z" fill="#777"/></svg>
<svg style="left:523px;top:749px" width="54" height="43" viewBox="0 0 54 43"><path d="M4 2.5 H19.5 L25 8 H48.5 Q51 8 51 10.5 V38 Q51 40.5 48.5 40.5 H5 Q2.5 40.5 2.5 38 V4 Q2.5 2.5 4 2.5Z" stroke="#eee" stroke-width="5" fill="none" stroke-linejoin="round"/></svg>
<div class="t" style="left:586px;top:763.00px;font-size:14px;color:#aaa;">_Array Basics</div>
<div class="a" style="left:577px;top:809.5px;width:402px;height:72.5px;background:#2b2b2b;border:1.2px solid #666;border-radius:3px"></div>
<svg style="left:562px;top:839px" width="10" height="10" viewBox="0 0 10 10"><path d="M0 0 L10 5.0 L0 10Z" fill="#888"/></svg>
<svg style="left:589.5px;top:813.5px" width="48" height="64" viewBox="0 0 48 64"><path d="M7.5 2.5 H31 L45.5 17 V55.5 Q45.5 61.5 39.5 61.5 H8.5 Q2.5 61.5 2.5 55.5 V8.5 Q2.5 2.5 8.5 2.5Z" stroke="#eee" stroke-width="4.8" fill="none" stroke-linejoin="round"/><path d="M30 2.5 V12.5 Q30 18 35.5 18 H45.5" fill="#eee"/><path d="M31 3 L45 17 H35 Q31 17 31 13Z" fill="#eee"/><path d="M14 30 H36 M14 38 H36 M14 46 H24" stroke="#eee" stroke-width="3.6" stroke-linecap="round"/></svg>
<div class="t" style="left:650px;top:830.00px;font-size:14.5px;color:#eee;">Document (1)</div>
<svg style="left:650px;top:847.5px" width="16" height="16" viewBox="0 0 16 16"><path d="M2 0.5 H11.5 L15.5 4.5 V15.5 H2Z" fill="#eee" stroke="#bbb" stroke-width="0.6"/><path d="M11.5 0.5 V4.5 H15.5" fill="#ccc"/><rect x="0" y="1" width="9" height="4.5" fill="#e0201b"/><path d="M5 13.5 Q8 7 9 5.5 Q10 9 13.5 12 Q8 11 5 13.5Z" stroke="#e0201b" stroke-width="1.2" fill="none"/></svg>
<div class="t" style="left:668.5px;top:850.00px;font-size:12px;color:#ddd;font-style:italic">Array Example - Horizontal.pdf</div>
<svg style="left:562px;top:914px" width="10" height="10" viewBox="0 0 10 10"><path d="M0 0 L10 5.0 L0 10Z" fill="#888"/></svg>
<svg style="left:589.5px;top:888.5px" width="48" height="64" viewBox="0 0 48 64"><path d="M7.5 2.5 H31 L45.5 17 V55.5 Q45.5 61.5 39.5 61.5 H8.5 Q2.5 61.5 2.5 55.5 V8.5 Q2.5 2.5 8.5 2.5Z" stroke="#eee" stroke-width="4.8" fill="none" stroke-linejoin="round"/><path d="M30 2.5 V12.5 Q30 18 35.5 18 H45.5" fill="#eee"/><path d="M31 3 L45 17 H35 Q31 17 31 13Z" fill="#eee"/><path d="M14 30 H36 M14 38 H36 M14 46 H24" stroke="#eee" stroke-width="3.6" stroke-linecap="round"/></svg>
<div class="t" style="left:650px;top:905.00px;font-size:14.5px;color:#999;">Document (2)</div>
<svg style="left:650px;top:922.5px" width="16" height="16" viewBox="0 0 16 16"><path d="M2 0.5 H11.5 L15.5 4.5 V15.5 H2Z" fill="#eee" stroke="#bbb" stroke-width="0.6"/><path d="M11.5 0.5 V4.5 H15.5" fill="#ccc"/><rect x="0" y="1" width="9" height="4.5" fill="#e0201b"/><path d="M5 13.5 Q8 7 9 5.5 Q10 9 13.5 12 Q8 11 5 13.5Z" stroke="#e0201b" stroke-width="1.2" fill="none"/></svg>
<div class="t" style="left:668.5px;top:925.00px;font-size:12px;color:#888;font-style:italic">Array Example - Vertical.pdf</div>
<svg style="left:562px;top:989px" width="10" height="10" viewBox="0 0 10 10"><path d="M0 0 L10 5.0 L0 10Z" fill="#888"/></svg>
<svg style="left:589.5px;top:963.5px" width="48" height="64" viewBox="0 0 48 64"><path d="M7.5 2.5 H31 L45.5 17 V55.5 Q45.5 61.5 39.5 61.5 H8.5 Q2.5 61.5 2.5 55.5 V8.5 Q2.5 2.5 8.5 2.5Z" stroke="#eee" stroke-width="4.8" fill="none" stroke-linejoin="round"/><path d="M30 2.5 V12.5 Q30 18 35.5 18 H45.5" fill="#eee"/><path d="M31 3 L45 17 H35 Q31 17 31 13Z" fill="#eee"/><path d="M14 30 H36 M14 38 H36 M14 46 H24" stroke="#eee" stroke-width="3.6" stroke-linecap="round"/></svg>
<div class="t" style="left:650px;top:980.00px;font-size:14.5px;color:#999;">Document (3)</div>
<svg style="left:650px;top:997.5px" width="16" height="16" viewBox="0 0 16 16"><path d="M2 0.5 H11.5 L15.5 4.5 V15.5 H2Z" fill="#eee" stroke="#bbb" stroke-width="0.6"/><path d="M11.5 0.5 V4.5 H15.5" fill="#ccc"/><rect x="0" y="1" width="9" height="4.5" fill="#e0201b"/><path d="M5 13.5 Q8 7 9 5.5 Q10 9 13.5 12 Q8 11 5 13.5Z" stroke="#e0201b" stroke-width="1.2" fill="none"/></svg>
<div class="t" style="left:668.5px;top:1000.00px;font-size:12px;color:#888;font-style:italic">Array Example - Flow.pdf</div>
<div class="a" style="left:994px;top:89px;width:910px;height:683px;background:#252525;"></div>
<div class="a" style="left:994px;top:89px;width:910px;height:42px;background:#262626;background-image:linear-gradient(#2f2f2f 1px,transparent 1px),linear-gradient(90deg,#2f2f2f 1px,transparent 1px);background-size:5px 5px;background-position:3px 3px"></div>
<div class="a" style="left:994px;top:131px;width:910px;height:1px;background:#585858;"></div>
<svg style="left:1013px;top:100px" width="17" height="20" viewBox="0 0 17 20"><rect x="0" y="0" width="17" height="2" fill="#dcdcdc"/><rect x="0" y="18" width="17" height="2" fill="#dcdcdc"/><path d="M8.5 3 L12.5 7.5 H10 V12.5 H12.5 L8.5 17 L4.5 12.5 H7 V7.5 H4.5Z" fill="#dcdcdc"/></svg>
<svg style="left:1041px;top:101px" width="19" height="18" viewBox="0 0 19 18"><rect x="0.9" y="0.9" width="17.2" height="16.2" stroke="#dcdcdc" stroke-width="1.8" stroke-dasharray="2 1.6" fill="none"/><rect x="5" y="5" width="9" height="8" stroke="#dcdcdc" stroke-width="2" fill="none"/></svg>
<svg style="left:1069px;top:100px" width="18" height="20" viewBox="0 0 18 20"><path d="M1 4.5 V19 H13.5" stroke="#dcdcdc" stroke-width="2" fill="none"/><rect x="4.5" y="0" width="13" height="16" rx="1.5" fill="#dcdcdc"/></svg>
<svg style="left:1363px;top:105px" width="14" height="12" viewBox="0 0 14 12"><rect x="0" y="0" width="1.8" height="12" fill="#7a7a7a"/><path d="M3.5 6 L13.5 0 V12Z" fill="#7a7a7a"/></svg>
<svg style="left:1394.5px;top:105px" width="8" height="12" viewBox="0 0 8 12"><path d="M7 0.5 L1.5 6 L7 11.5" stroke="#7a7a7a" stroke-width="1.8" fill="none"/></svg>
<div class="a" style="left:1428px;top:97px;width:26px;height:25px;background:transparent;border:1.2px solid #555;border-radius:4px"></div>
<div class="t" style="left:1436.5px;top:104.00px;font-size:14px;color:#c8c8c8;">1</div>
<div class="t" style="left:1457.5px;top:104.00px;font-size:14px;color:#c8c8c8;">/ 1</div>
<svg style="left:1495px;top:105px" width="8" height="12" viewBox="0 0 8 12"><path d="M1 0.5 L6.5 6 L1 11.5" stroke="#7a7a7a" stroke-width="1.8" fill="none"/></svg>
<svg style="left:1521px;top:105px" width="14" height="12" viewBox="0 0 14 12"><rect x="12.2" y="0" width="1.8" height="12" fill="#7a7a7a"/><path d="M10.5 6 L0.5 0 V12Z" fill="#7a7a7a"/></svg>
<svg style="left:1790px;top:100.5px" width="21" height="19" viewBox="0 0 21 19"><rect x="4" y="0" width="13" height="4" fill="#b0b0b0"/><path d="M2 5 H19 Q21 5 21 7 V14 H17.5 V18.5 H3.5 V14 H0 V7 Q0 5 2 5Z" fill="#b0b0b0"/><rect x="6.5" y="12" width="8" height="3.5" fill="#2a2a2a"/><circle cx="16.5" cy="8.3" r="0.9" fill="#2a2a2a"/></svg>
<svg style="left:1819px;top:100px" width="20.5" height="20.5" viewBox="0 0 20.5 20.5"><circle cx="10.25" cy="10.25" r="10.2" fill="#b0b0b0"/><rect x="9.2" y="5" width="2" height="2" fill="#2a2a2a"/><rect x="9.2" y="8.5" width="2" height="6.8" fill="#2a2a2a"/></svg>
<div class="a" style="left:1849px;top:101px;width:1.2px;height:17px;background:#666;"></div>
<div class="a" style="left:1860px;top:99px;width:28px;height:19px;background:#2e2e2e;border-radius:4px"></div>
<svg style="left:1860px;top:102px" width="16" height="16" viewBox="0 0 16 16"><path d="M0 0.5 H3 L4 1.5 H7 V6 H0Z" fill="#e8b040"/><path d="M1 3 H8 L6.5 6.5 H0Z" fill="#f5d070"/><path d="M4 6.5 V14 H9 M6 9.5 H9" stroke="#ccc" stroke-width="0.8" fill="none"/><rect x="9" y="2" width="6" height="7" fill="#eee"/><rect x="9" y="10" width="6" height="6" fill="#eee"/></svg>
<svg style="left:1878px;top:105.5px" width="8" height="8" viewBox="0 0 8 8"><path d="M0 0 H8 L4 8Z" fill="#888"/></svg>
<div class="a" style="left:1203.5px;top:134px;width:491px;height:635px;background:#fff;"></div>
<div class="a" style="left:1257px;top:192px;width:385px;height:18px;background:#36b0a8;"></div>
<div class="t" style="left:1262px;top:195.00px;font-size:10.5px;color:#fff;font-weight:bold">HORIZONTAL ARRAY</div>
<div class="a" style="left:1376px;top:215.8px;width:39px;height:21.8px;background:#fff;border:1.9px solid #f7a648;border-radius:4px"></div>
<div class="t" style="left:1395.5px;top:222.00px;font-size:9.6px;color:#444;transform:translateX(-50%)">Eggs</div>
<div class="a" style="left:1434px;top:215.8px;width:66.5px;height:21.8px;background:#fff;border:1.9px solid #f7a648;border-radius:4px"></div>
<div class="t" style="left:1467.25px;top:222.00px;font-size:9.6px;color:#444;transform:translateX(-50%)">Hank Aaron</div>
<div class="a" style="left:1521px;top:215.8px;width:44.5px;height:21.8px;background:#fff;border:1.9px solid #f7a648;border-radius:4px"></div>
<div class="t" style="left:1543.25px;top:222.00px;font-size:9.6px;color:#444;transform:translateX(-50%)">Butter</div>
<div class="a" style="left:994px;top:778px;width:910px;height:286px;background:#252525;"></div>
<div class="t" style="left:1009.6px;top:789.00px;font-size:14.5px;color:#888;">0 results in 0 ms.</div>
<svg style="left:1869.5px;top:787.5px" width="13" height="21" viewBox="0 0 13 21"><rect x="0.5" y="0" width="12" height="3" fill="#777"/><path d="M0.5 5 H12.5 L10.5 9 V20.5 H2.5 V9Z" fill="#777"/><circle cx="6.5" cy="11.5" r="1.2" fill="#252525"/></svg>
<div class="a" style="left:994px;top:818px;width:910px;height:1px;background:#3a3a3a;"></div>
<div class="t" style="left:1007px;top:835.00px;font-size:14.5px;color:#bdbdbd;font-weight:bold">Value</div>
<div class="t" style="left:1306px;top:835.00px;font-size:14.5px;color:#bdbdbd;font-weight:bold">Page No</div>
<div class="t" style="left:1406px;top:835.00px;font-size:14.5px;color:#bdbdbd;font-weight:bold">Span</div>
<div class="t" style="left:1606px;top:835.00px;font-size:14.5px;color:#bdbdbd;font-weight:bold">Confidence</div>
<div class="t" style="left:1706px;top:835.00px;font-size:14.5px;color:#bdbdbd;font-weight:bold">Source</div>
<div class="a" style="left:1002px;top:1048px;width:889px;height:8px;background:#1c4a4e;border-radius:4px"></div>
<svg style="left:0;top:0;filter:drop-shadow(3px 3px 2.5px rgba(0,0,0,0.75))" width="1920" height="1080" viewBox="0 0 1920 1080"><line x1="223.8" y1="324.0" x2="160.6" y2="262.2" stroke="#f7941f" stroke-width="5.2"/><path d="M142 244 L171.8 256.4 L155.1 273.6Z" fill="#f7941f"/><circle cx="231" cy="331" r="19.5" fill="#f7941f"/><rect x="63" y="331" width="335" height="146" fill="#f7941f"/></svg>
<div class="t" style="left:225px;top:320.00px;font-size:23.3px;color:#fff;font-weight:bold;transform:scaleX(0.8);-webkit-text-stroke:0.3px #fff">1</div>
<div class="t" style="left:229px;top:350.00px;font-size:23.3px;color:#fff;font-weight:bold;transform:translateX(-50%) scaleX(0.965);-webkit-text-stroke:0.35px #fff">To begin, we need an object</div>
<div class="t" style="left:229px;top:379.00px;font-size:23.3px;color:#fff;font-weight:bold;transform:translateX(-50%) scaleX(0.965);-webkit-text-stroke:0.35px #fff">to set an extractor on. We</div>
<div class="t" style="left:229px;top:407.00px;font-size:23.3px;color:#fff;font-weight:bold;transform:translateX(-50%) scaleX(0.965);-webkit-text-stroke:0.35px #fff">are going to configure the</div>
<div class="t" style="left:229px;top:436.00px;font-size:23.3px;color:#fff;font-weight:bold;transform:translateX(-50%) scaleX(0.965);-webkit-text-stroke:0.35px #fff">Array on a Data Type.</div>
<svg style="left:0;top:0;filter:drop-shadow(3px 3px 2.5px rgba(0,0,0,0.75))" width="1920" height="1080" viewBox="0 0 1920 1080"><line x1="1036.9" y1="262.0" x2="973.2" y2="199.6" stroke="#f7941f" stroke-width="5.2"/><path d="M954.6 181.4 L984.4 193.8 L967.6 211.0Z" fill="#f7941f"/><circle cx="1044" cy="269" r="19.5" fill="#f7941f"/><rect x="1044" y="202" width="319" height="132" fill="#f7941f"/></svg>
<div class="t" style="left:1038px;top:258.00px;font-size:23.3px;color:#fff;font-weight:bold;transform:scaleX(0.8);-webkit-text-stroke:0.3px #fff">1</div>
<div class="t" style="left:1203.4px;top:213.00px;font-size:23.3px;color:#fff;font-weight:bold;transform:translateX(-50%) scaleX(0.965);-webkit-text-stroke:0.35px #fff">For the extractor, we are</div>
<div class="t" style="left:1203.4px;top:242.00px;font-size:23.3px;color:#fff;font-weight:bold;transform:translateX(-50%) scaleX(0.965);-webkit-text-stroke:0.35px #fff">going to use a simple</div>
<div class="t" style="left:1203.4px;top:270.00px;font-size:23.3px;color:#fff;font-weight:bold;transform:translateX(-50%) scaleX(0.965);-webkit-text-stroke:0.35px #fff">List Match. Click the</div>
<div class="t" style="left:1203.4px;top:299.00px;font-size:23.3px;color:#fff;font-weight:bold;transform:translateX(-50%) scaleX(0.965);-webkit-text-stroke:0.35px #fff">ellipsis icon to configure.</div>
</div></body></html>
